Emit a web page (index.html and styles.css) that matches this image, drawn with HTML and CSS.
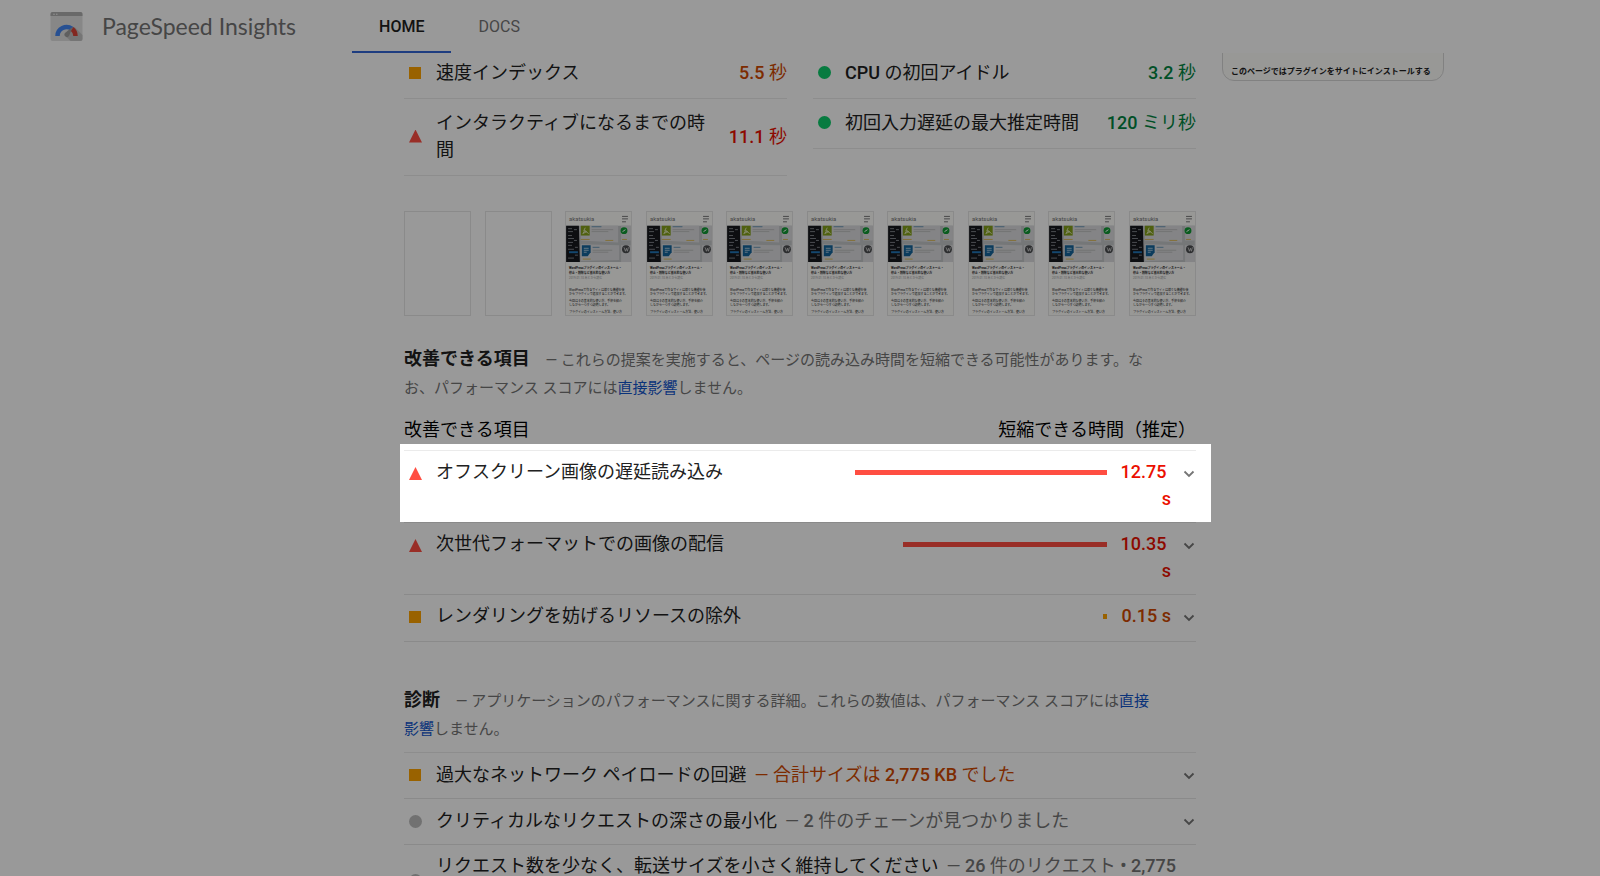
FILE: index.html
```html
<!DOCTYPE html>
<html lang="ja">
<head>
    <meta charset="UTF-8">
    <meta name="viewport" content="width=device-width, initial-scale=1.0">
    <title>PageSpeed Insights</title>
    <link rel="stylesheet" href="styles.css">
</head>
<body>
    <!-- shared shapes -->
    <svg class="defs" aria-hidden="true">
        <symbol id="chevron" viewBox="0 0 12 8">
            <path d="M1.500 1.500 6 6l4.500-4.500" fill="none" stroke="#757575" stroke-width="1.800"/>
        </symbol>
        <symbol id="shot" viewBox="0 0 66 105">
            <rect width="66" height="105" fill="#fdfdfb"/>
            <text x="3" y="9" font-size="6" fill="#777">akatsukia</text>
            <path d="M57 4.500h6M57 7h6M57 10h4" stroke="#555" stroke-width=".8"/>
            <rect y="14" width="66" height="37" fill="#c4c6c9"/>
            <path d="M0 14h13l1 37H0z" fill="#16181d"/>
            <path d="M2 17h4M2 20h5M2 24h4M2 27h6M2 31h5M2 34h4M2 38h6M2 47h6M8 18h3M8 29h3M9 36h3M9 44h3" stroke="#8b8f96" stroke-width=".9"/>
            <path d="M3 41h9" stroke="#2277b8" stroke-width="2"/>
            <path d="M15 14h38v17l-38-2zM15 33l39 1v15l-39 1zM56 14h10v15H56zM56 34h10v17H56z" fill="#dcdddf"/>
            <rect x="15" y="14" width="9" height="10" fill="#84a11c"/>
            <path d="m19.500 16-1.500 3 3 1-4 2 2-3 4 3" fill="none" stroke="#dce6b0"/>
            <path d="M16 34h9v7l-3 4h-6z" fill="#14659b"/>
            <path d="M18 37h5M18 39h5M18 41h3" stroke="#cfe2ef" stroke-width=".8"/>
            <path d="M26 15h10M27 36h7" stroke="#4f86ad" stroke-width=".8"/>
            <path d="M26 18h22M26 20h17M27 39h20M27 41h16" stroke="#aaa" stroke-width=".6"/>
            <path d="M15 28h9M17 48h8M40 29h8M57 28h5" stroke="#d8b13c" stroke-width=".8"/>
            <circle cx="59" cy="19" r="3.500" fill="#129a35"/>
            <path d="m57.500 20 3-2" stroke="#fff"/>
            <circle cx="61" cy="38" r="4" fill="#4b4d50"/>
            <path d="m59 36 1.500 4 1-3 1 3 1-4" fill="none" stroke="#e6e6e6" stroke-width=".7"/>
            <g font-size="3" fill="#222">
                <g font-weight="700">
                    <text x="3" y="58">WordPressプラグインのインストール・</text>
                    <text x="3" y="63">停止・削除など基本的な使い方</text>
                </g>
                <text x="3" y="68" fill="#999">2019.01.10 あとから読む</text>
                <text x="3" y="81">WordPressで作るサイトは様々な機能を後</text>
                <text x="3" y="85">からプラグインで追加することができます。</text>
                <text x="3" y="92">今回はその基本的な使い方、手順を紹介</text>
                <text x="3" y="96">しながら一つずつ説明します。</text>
                <text x="3" y="103">プラグインのインストール方法、使い方</text>
            </g>
        </symbol>
    </svg>

    <header class="header">
        <svg class="logo" viewBox="0 0 32 29" aria-hidden="true">
            <rect width="32" height="29" rx="2" fill="#e1e1e1"/>
            <path d="M2 0h28a2 2 0 0 1 2 2v2H0V2a2 2 0 0 1 2-2z" fill="#b0b0b0"/>
            <circle cx="3.500" cy="2.200" r=".8" fill="#eee"/>
            <circle cx="6.300" cy="2.200" r=".8" fill="#eee"/>
            <path d="m24 15 8 8v4a2 2 0 0 1-2 2H20l-5-5z" fill="#c4c4c4"/>
            <path d="M7 24a9 9 0 0 1 14.500-7.100" fill="none" stroke="#4285f4" stroke-width="4.500"/>
            <path d="M21.500 16.900A9 9 0 0 1 25 24" fill="none" stroke="#db4437" stroke-width="4.500"/>
            <path d="m22.500 14.500-8 6.500a2.500 2.500 0 1 0 4 3z" fill="#9e9e9e"/>
        </svg>
        <span class="product">PageSpeed Insights</span>
        <nav class="tabs">
            <a class="tab tab-active" href="#home">HOME</a>
            <a class="tab" href="#docs">DOCS</a>
        </nav>
    </header>

    <div class="page">
        <main class="report">
            <section class="metrics">
                <div class="metric-column">
                    <div class="metric">
                        <span class="icon average"></span>
                        <span class="metric-title">速度インデックス</span>
                        <span class="metric-value text-average"><b>5.5</b> 秒</span>
                    </div>
                    <div class="metric">
                        <span class="icon fail"></span>
                        <span class="metric-title">インタラクティブになるまでの時間</span>
                        <span class="metric-value text-fail"><b>11.1</b> 秒</span>
                    </div>
                </div>
                <div class="metric-column">
                    <div class="metric">
                        <span class="icon pass"></span>
                        <span class="metric-title"><b>CPU</b> の初回アイドル</span>
                        <span class="metric-value text-pass"><b>3.2</b> 秒</span>
                    </div>
                    <div class="metric">
                        <span class="icon pass"></span>
                        <span class="metric-title">初回入力遅延の最大推定時間</span>
                        <span class="metric-value text-pass"><b>120</b> ミリ秒</span>
                    </div>
                </div>
            </section>

            <div class="filmstrip">
                <div class="frame"></div>
                <div class="frame"></div>
                <div class="frame"><svg><use href="#shot"/></svg></div>
                <div class="frame"><svg><use href="#shot"/></svg></div>
                <div class="frame"><svg><use href="#shot"/></svg></div>
                <div class="frame"><svg><use href="#shot"/></svg></div>
                <div class="frame"><svg><use href="#shot"/></svg></div>
                <div class="frame"><svg><use href="#shot"/></svg></div>
                <div class="frame"><svg><use href="#shot"/></svg></div>
                <div class="frame"><svg><use href="#shot"/></svg></div>
            </div>

            <section class="opportunities">
                <div class="group-header">
                    <h2>改善できる項目</h2>
                    <span class="description">— これらの提案を実施すると、ページの読み込み時間を短縮できる可能性があります。な<br>お、パフォーマンス スコアには<a href="#scoring">直接影響</a>しません。</span>
                </div>
                <div class="columns-header">
                    <span>改善できる項目</span>
                    <span>短縮できる時間（推定）</span>
                </div>
                <div class="audits">
                    <details class="audit highlight">
                        <summary>
                            <span class="icon fail"></span>
                            <span class="audit-title">オフスクリーン画像の遅延読み込み</span>
                            <span class="sparkline"><span class="bar bar-fail" style="width: 100%"></span></span>
                            <span class="savings text-fail">12.75&nbsp;<br>s</span>
                            <svg class="chevron"><use href="#chevron"/></svg>
                        </summary>
                    </details>
                    <details class="audit">
                        <summary>
                            <span class="icon fail"></span>
                            <span class="audit-title">次世代フォーマットでの画像の配信</span>
                            <span class="sparkline"><span class="bar bar-fail" style="width: 81%"></span></span>
                            <span class="savings text-fail">10.35&nbsp;<br>s</span>
                            <svg class="chevron"><use href="#chevron"/></svg>
                        </summary>
                    </details>
                    <details class="audit">
                        <summary>
                            <span class="icon average"></span>
                            <span class="audit-title">レンダリングを妨げるリソースの除外</span>
                            <span class="sparkline"><span class="bar bar-average" style="width: 1%"></span></span>
                            <span class="savings text-average">0.15 s</span>
                            <svg class="chevron"><use href="#chevron"/></svg>
                        </summary>
                    </details>
                </div>
            </section>

            <section class="diagnostics">
                <div class="group-header">
                    <h2>診断</h2>
                    <span class="description">— アプリケーションのパフォーマンスに関する詳細。これらの数値は、パフォーマンス スコアには<a href="#scoring">直接<br>影響</a>しません。</span>
                </div>
                <div class="audits">
                    <details class="audit">
                        <summary>
                            <span class="icon average"></span>
                            <span class="audit-title">過大なネットワーク ペイロードの回避<span class="display-value text-average">— 合計サイズは <b>2,775 KB</b> でした</span></span>
                            <svg class="chevron"><use href="#chevron"/></svg>
                        </summary>
                    </details>
                    <details class="audit">
                        <summary>
                            <span class="icon informative"></span>
                            <span class="audit-title">クリティカルなリクエストの深さの最小化<span class="display-value">— <b>2</b> 件のチェーンが見つかりました</span></span>
                            <svg class="chevron"><use href="#chevron"/></svg>
                        </summary>
                    </details>
                    <details class="audit">
                        <summary>
                            <span class="icon informative"></span>
                            <span class="audit-title">リクエスト数を少なく、転送サイズを小さく維持してください<span class="display-value">— <b>26</b> 件のリクエスト <b>• 2,775 KB</b></span></span>
                            <svg class="chevron"><use href="#chevron"/></svg>
                        </summary>
                    </details>
                </div>
            </section>
        </main>

        <aside class="screenshot">このページではプラグインをサイトにインストールする</aside>
    </div>
</body>
</html>
```
FILE: styles.css
```css
* {
    box-sizing: border-box;
}

html,
body {
    height: 100%;
}

body {
    margin: 0;
    overflow: hidden;
    background-color: #fff;
    color: #212121;
    font-family: Roboto, "Noto Sans CJK JP", sans-serif;
    font-size: 18px;
    line-height: 27px;
}

a {
    color: #15c;
    text-decoration: none;
}

b {
    font-weight: 500;
}

.defs {
    display: none;
}

/* header */
.header {
    position: relative;
    z-index: 1;
    display: flex;
    align-items: center;
    height: 53px;
    padding-left: 50px;
    background-color: #fff;
}

.logo {
    width: 33px;
    height: 29px;
}

.product {
    margin-left: 19px;
    color: #757575;
    font-family: Lato, sans-serif;
    font-size: 23px;
}

.tabs {
    display: flex;
    align-self: stretch;
    margin-left: 56px;
}

.tab {
    display: flex;
    align-items: center;
    padding: 2px 27px 0;
    border-bottom: 2px solid transparent;
    color: #757575;
    font-size: 16px;
}

.tab-active {
    border-bottom-color: #3367d6;
    color: #212121;
    font-weight: 500;
}

/* page columns */
.page {
    display: grid;
    grid-template-columns: minmax(0, 1fr) minmax(0, 792px) minmax(0, 1fr);
    column-gap: 26px;
    margin-top: -4px;
}

.report {
    grid-column: 2;
}

.screenshot {
    justify-self: start;
    align-self: start;
    width: 222px;
    padding: 12px 8px 0;
    height: 32px;
    border: 1px solid #d8d8d8;
    border-radius: 0 0 12px 12px;
    background-color: #fdfdfb;
    font-size: 8px;
    font-weight: 700;
    line-height: 20px;
    white-space: nowrap;
}

/* status icons */
.icon {
    flex: none;
    width: 12px;
    height: 12px;
    margin: 0 15px 0 5px;
}

.average {
    background-color: #ffa400;
}

.fail {
    width: 13px;
    height: 13px;
    margin-right: 14px;
    background-color: #ff4e42;
    clip-path: polygon(50% 0, 100% 100%, 0 100%);
}

.pass,
.informative {
    width: 13px;
    height: 13px;
    margin-right: 14px;
    border-radius: 50%;
    background-color: #0cce6b;
}

.informative {
    background-color: #bdbdbd;
}

.text-pass {
    color: #018642;
}

.text-average {
    color: #d04900;
}

.text-fail {
    color: #eb0f00;
}

/* metrics */
.metrics {
    display: grid;
    grid-template-columns: 1fr 1fr;
    align-items: start;
    column-gap: 26px;
}

.metric {
    display: flex;
    align-items: center;
    padding: 10px 0 12px;
    border-bottom: 1px solid #ebebeb;
}

.metric-title {
    flex: 1;
}

.metric-value {
    margin-left: 16px;
    white-space: nowrap;
}

/* filmstrip */
.filmstrip {
    display: flex;
    justify-content: space-between;
    margin-top: 35px;
}

.frame {
    width: 67px;
    height: 105px;
    border: 1px solid #e6e6e6;
}

.frame svg {
    display: block;
    width: 100%;
    height: 100%;
}

/* audit groups */
.opportunities {
    margin-top: 30px;
}

.diagnostics {
    margin-top: 45px;
}

.group-header {
    font-size: 15px;
    line-height: 28px;
}

.group-header h2 {
    display: inline;
    margin: 0 12px 0 0;
    font-size: 18px;
    font-weight: 700;
    line-height: 20px;
}

.description {
    color: #757575;
}

.columns-header {
    display: flex;
    justify-content: space-between;
    padding: 14px 0 7px;
    color: #000;
}

.audits {
    border-top: 1px solid #ebebeb;
}

.diagnostics .audits {
    margin-top: 9px;
}

.audit {
    position: relative;
    border-bottom: 1px solid #e6e6e6;
}

.audit summary {
    display: flex;
    min-height: 46px;
    padding: 7px 0 10px;
    list-style: none;
    cursor: pointer;
}

.audit .icon {
    margin-top: 9px;
}

.audit-title {
    flex: 1;
}

.sparkline {
    flex: none;
    display: flex;
    justify-content: flex-end;
    width: 252px;
    margin-top: 12px;
}

.bar {
    height: 5px;
    min-width: 4px;
}

.bar-fail {
    background-color: #ff4e42;
}

.bar-average {
    background-color: #ffa400;
}

.savings {
    flex: none;
    width: 64px;
    font-weight: 500;
    text-align: right;
}

.chevron {
    flex: none;
    width: 12px;
    height: 8px;
    margin: 12px 1px 0 12px;
}

.diagnostics .audit summary {
    align-items: center;
    min-height: 45px;
}

.diagnostics .icon {
    margin-top: 2px;
}

.diagnostics .chevron {
    margin: 4px 1px 0 0;
}

.display-value {
    margin-left: 8px;
    color: #757575;
}

.display-value.text-average {
    color: #d04900;
}

/* spotlight: everything outside the box is dimmed */
.highlight::after {
    content: "";
    position: absolute;
    z-index: 2;
    top: -7px;
    right: -15px;
    bottom: 0;
    left: -4px;
    box-shadow: 0 0 0 9999px rgba(0, 0, 0, 0.4);
    pointer-events: none;
}
```
